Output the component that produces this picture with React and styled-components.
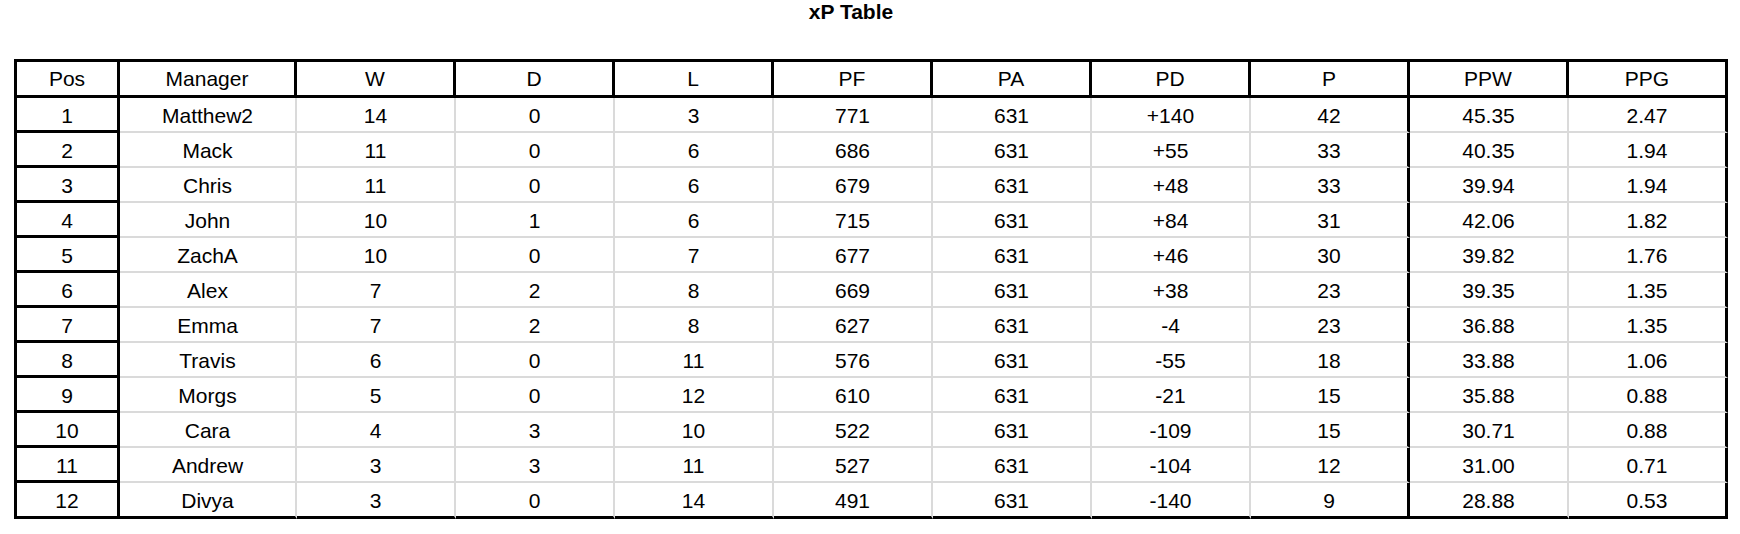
import styled, { createGlobalStyle } from "styled-components";

const GlobalStyle = createGlobalStyle`
  body {
    margin: 0;
    background: #ffffff;
    font-family: "Liberation Sans", Arial, sans-serif;
    color: #000000;
  }
`;

const columns = ["Pos", "Manager", "W", "D", "L", "PF", "PA", "PD", "P", "PPW", "PPG"];

const rows = [
  [1, "Matthew2", 14, 0, 3, 771, 631, "+140", 42, "45.35", "2.47"],
  [2, "Mack", 11, 0, 6, 686, 631, "+55", 33, "40.35", "1.94"],
  [3, "Chris", 11, 0, 6, 679, 631, "+48", 33, "39.94", "1.94"],
  [4, "John", 10, 1, 6, 715, 631, "+84", 31, "42.06", "1.82"],
  [5, "ZachA", 10, 0, 7, 677, 631, "+46", 30, "39.82", "1.76"],
  [6, "Alex", 7, 2, 8, 669, 631, "+38", 23, "39.35", "1.35"],
  [7, "Emma", 7, 2, 8, 627, 631, "-4", 23, "36.88", "1.35"],
  [8, "Travis", 6, 0, 11, 576, 631, "-55", 18, "33.88", "1.06"],
  [9, "Morgs", 5, 0, 12, 610, 631, "-21", 15, "35.88", "0.88"],
  [10, "Cara", 4, 3, 10, 522, 631, "-109", 15, "30.71", "0.88"],
  [11, "Andrew", 3, 3, 11, 527, 631, "-104", 12, "31.00", "0.71"],
  [12, "Divya", 3, 0, 14, 491, 631, "-140", 9, "28.88", "0.53"],
];

// columns that get a heavy black line on their right side
const thickAfter = [0, 8, 10];

const Page = styled.div`
  width: 1740px;
  height: 534px;
  background: #ffffff;
`;

const Title = styled.h1`
  margin: 0 0 35px;
  padding: 0 38px 0 0;
  font-size: 21px;
  line-height: 24px;
  font-weight: 700;
  text-align: center;
`;

const Table = styled.div`
  display: grid;
  grid-template-columns: 103px 177px repeat(9, 159px);
  width: max-content;
  margin-left: 14px;
  border-top: 3px solid #000;
  border-left: 3px solid #000;
`;

const HeadCell = styled.div`
  box-sizing: border-box;
  height: 36px;
  display: flex;
  align-items: center;
  justify-content: center;
  font-size: 21px;
  line-height: 24px;
  border-right: 3px solid #000;
  border-bottom: 3px solid #000;
`;

const Cell = styled.div`
  box-sizing: border-box;
  height: ${(p) => (p.$last ? 36 : 35)}px;
  display: flex;
  align-items: center;
  justify-content: center;
  padding-top: 3px;
  font-size: 21px;
  line-height: 24px;
  border-right: ${(p) => (p.$thick ? "3px solid #000" : "2px solid #dadada")};
  border-bottom: ${(p) => (p.$last || p.$pos ? "3px solid #000" : "2px solid #dadada")};
`;

export default function App() {
  return (
    <Page>
      <GlobalStyle />
      <Title>xP Table</Title>
      <Table>
        {columns.map((c) => (
          <HeadCell key={c}>{c}</HeadCell>
        ))}
        {rows.map((row, r) =>
          row.map((value, i) => (
            <Cell
              key={`${r}-${i}`}
              $pos={i === 0}
              $thick={thickAfter.includes(i)}
              $last={r === rows.length - 1}
            >
              {value}
            </Cell>
          ))
        )}
      </Table>
    </Page>
  );
}
